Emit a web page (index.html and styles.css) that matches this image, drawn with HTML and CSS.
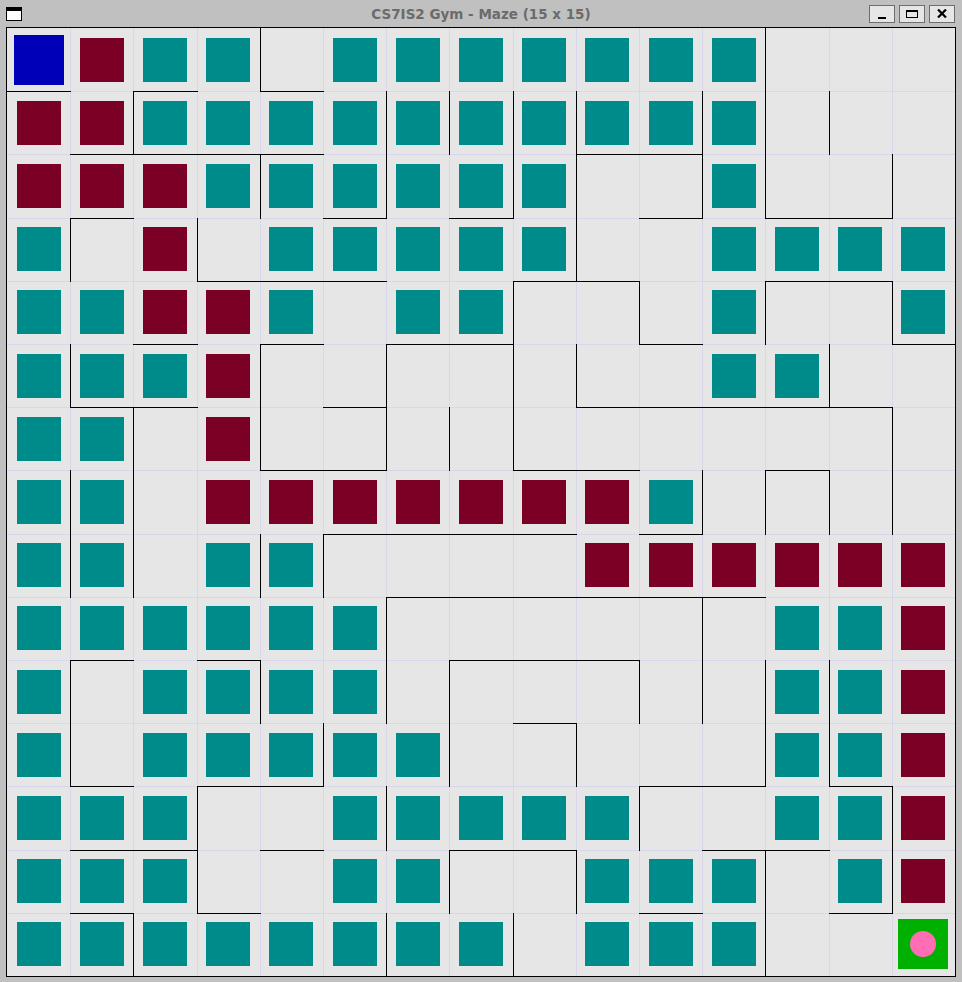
FILE: index.html
```html
<!DOCTYPE html>
<html>
<head>
<meta charset="utf-8">
<title>CS7IS2 Gym - Maze (15 x 15)</title>
<link rel="stylesheet" href="styles.css">
</head>
<body>
<!-- vindu-tittel med ikon og knapper -->
<div class="titlebar">
    <div class="appicon"></div>
    <div class="title">CS7IS2 Gym - Maze (15 x 15)</div>
    <div class="winbtns">
        <div class="wbtn"><span class="min"></span></div>
        <div class="wbtn"><span class="max"></span></div>
        <div class="wbtn">
            <svg width="10" height="9" viewBox="0 0 10 9"><path d="M1 0.5 L9 8.5 M9 0.5 L1 8.5" stroke="#000" stroke-width="2.2"/></svg>
        </div>
    </div>
</div>

<!-- labyrinten: s = start, g = mål, m = sti, t = besøkt. r/b = vegg til høyre/under -->
<div class="maze">
<!-- rad 0 -->
<div class="c b"><i class="s"></i></div><div class="c"><i class="m"></i></div><div class="c b"><i class="t"></i></div><div class="c r"><i class="t"></i></div><div class="c b"></div><div class="c"><i class="t"></i></div><div class="c"><i class="t"></i></div><div class="c"><i class="t"></i></div><div class="c"><i class="t"></i></div><div class="c"><i class="t"></i></div><div class="c"><i class="t"></i></div><div class="c r"><i class="t"></i></div><div class="c"></div><div class="c"></div><div class="c"></div>
<!-- rad 1 -->
<div class="c"><i class="m"></i></div><div class="c r b"><i class="m"></i></div><div class="c b"><i class="t"></i></div><div class="c b"><i class="t"></i></div><div class="c b"><i class="t"></i></div><div class="c r"><i class="t"></i></div><div class="c r"><i class="t"></i></div><div class="c r"><i class="t"></i></div><div class="c r"><i class="t"></i></div><div class="c b"><i class="t"></i></div><div class="c r b"><i class="t"></i></div><div class="c r"><i class="t"></i></div><div class="c r"></div><div class="c"></div><div class="c"></div>
<!-- rad 2 -->
<div class="c"><i class="m"></i></div><div class="c b"><i class="m"></i></div><div class="c"><i class="m"></i></div><div class="c r"><i class="t"></i></div><div class="c"><i class="t"></i></div><div class="c r b"><i class="t"></i></div><div class="c"><i class="t"></i></div><div class="c r b"><i class="t"></i></div><div class="c r"><i class="t"></i></div><div class="c"></div><div class="c r b"></div><div class="c r"><i class="t"></i></div><div class="c b"></div><div class="c r b"></div><div class="c"></div>
<!-- rad 3 -->
<div class="c r"><i class="t"></i></div><div class="c"></div><div class="c r"><i class="m"></i></div><div class="c b"></div><div class="c b"><i class="t"></i></div><div class="c b"><i class="t"></i></div><div class="c"><i class="t"></i></div><div class="c"><i class="t"></i></div><div class="c r b"><i class="t"></i></div><div class="c b"></div><div class="c"></div><div class="c"><i class="t"></i></div><div class="c b"><i class="t"></i></div><div class="c b"><i class="t"></i></div><div class="c"><i class="t"></i></div>
<!-- rad 4 -->
<div class="c"><i class="t"></i></div><div class="c"><i class="t"></i></div><div class="c b"><i class="m"></i></div><div class="c"><i class="m"></i></div><div class="c b"><i class="t"></i></div><div class="c"></div><div class="c b"><i class="t"></i></div><div class="c r b"><i class="t"></i></div><div class="c"></div><div class="c r"></div><div class="c b"></div><div class="c r"><i class="t"></i></div><div class="c"></div><div class="c r"></div><div class="c b"><i class="t"></i></div>
<!-- rad 5 -->
<div class="c r"><i class="t"></i></div><div class="c b"><i class="t"></i></div><div class="c b"><i class="t"></i></div><div class="c r"><i class="m"></i></div><div class="c"></div><div class="c r b"></div><div class="c"></div><div class="c r"></div><div class="c r"></div><div class="c b"></div><div class="c b"></div><div class="c b"><i class="t"></i></div><div class="c r b"><i class="t"></i></div><div class="c b"></div><div class="c"></div>
<!-- rad 6 -->
<div class="c"><i class="t"></i></div><div class="c r"><i class="t"></i></div><div class="c"></div><div class="c r"><i class="m"></i></div><div class="c b"></div><div class="c r b"></div><div class="c r"></div><div class="c r"></div><div class="c b"></div><div class="c b"></div><div class="c"></div><div class="c"></div><div class="c b"></div><div class="c r"></div><div class="c"></div>
<!-- rad 7 -->
<div class="c r"><i class="t"></i></div><div class="c r"><i class="t"></i></div><div class="c"></div><div class="c"><i class="m"></i></div><div class="c"><i class="m"></i></div><div class="c b"><i class="m"></i></div><div class="c b"><i class="m"></i></div><div class="c b"><i class="m"></i></div><div class="c b"><i class="m"></i></div><div class="c"><i class="m"></i></div><div class="c r b"><i class="t"></i></div><div class="c r"></div><div class="c r"></div><div class="c r"></div><div class="c"></div>
<!-- rad 8 -->
<div class="c r"><i class="t"></i></div><div class="c r"><i class="t"></i></div><div class="c"></div><div class="c r"><i class="t"></i></div><div class="c r"><i class="t"></i></div><div class="c"></div><div class="c b"></div><div class="c b"></div><div class="c b"></div><div class="c b"><i class="m"></i></div><div class="c b"><i class="m"></i></div><div class="c b"><i class="m"></i></div><div class="c"><i class="m"></i></div><div class="c"><i class="m"></i></div><div class="c"><i class="m"></i></div>
<!-- rad 9 -->
<div class="c"><i class="t"></i></div><div class="c b"><i class="t"></i></div><div class="c"><i class="t"></i></div><div class="c b"><i class="t"></i></div><div class="c"><i class="t"></i></div><div class="c r"><i class="t"></i></div><div class="c"></div><div class="c b"></div><div class="c b"></div><div class="c b"></div><div class="c r"></div><div class="c"></div><div class="c"><i class="t"></i></div><div class="c"><i class="t"></i></div><div class="c"><i class="m"></i></div>
<!-- rad 10 -->
<div class="c r"><i class="t"></i></div><div class="c"></div><div class="c"><i class="t"></i></div><div class="c r"><i class="t"></i></div><div class="c"><i class="t"></i></div><div class="c r"><i class="t"></i></div><div class="c r"></div><div class="c"></div><div class="c b"></div><div class="c r"></div><div class="c r"></div><div class="c r"></div><div class="c r"><i class="t"></i></div><div class="c"><i class="t"></i></div><div class="c"><i class="m"></i></div>
<!-- rad 11 -->
<div class="c r"><i class="t"></i></div><div class="c b"></div><div class="c"><i class="t"></i></div><div class="c b"><i class="t"></i></div><div class="c r b"><i class="t"></i></div><div class="c"><i class="t"></i></div><div class="c r"><i class="t"></i></div><div class="c"></div><div class="c r"></div><div class="c"></div><div class="c b"></div><div class="c r b"></div><div class="c r"><i class="t"></i></div><div class="c b"><i class="t"></i></div><div class="c"><i class="m"></i></div>
<!-- rad 12 -->
<div class="c"><i class="t"></i></div><div class="c b"><i class="t"></i></div><div class="c r b"><i class="t"></i></div><div class="c"></div><div class="c b"></div><div class="c r"><i class="t"></i></div><div class="c"><i class="t"></i></div><div class="c b"><i class="t"></i></div><div class="c b"><i class="t"></i></div><div class="c r"><i class="t"></i></div><div class="c"></div><div class="c b"></div><div class="c b"><i class="t"></i></div><div class="c r"><i class="t"></i></div><div class="c"><i class="m"></i></div>
<!-- rad 13 -->
<div class="c"><i class="t"></i></div><div class="c b"><i class="t"></i></div><div class="c r"><i class="t"></i></div><div class="c b"></div><div class="c"></div><div class="c"><i class="t"></i></div><div class="c r"><i class="t"></i></div><div class="c"></div><div class="c r"></div><div class="c"><i class="t"></i></div><div class="c b"><i class="t"></i></div><div class="c r"><i class="t"></i></div><div class="c"></div><div class="c r b"><i class="t"></i></div><div class="c"><i class="m"></i></div>
<!-- rad 14 -->
<div class="c"><i class="t"></i></div><div class="c r"><i class="t"></i></div><div class="c"><i class="t"></i></div><div class="c"><i class="t"></i></div><div class="c"><i class="t"></i></div><div class="c r"><i class="t"></i></div><div class="c"><i class="t"></i></div><div class="c r"><i class="t"></i></div><div class="c"></div><div class="c"><i class="t"></i></div><div class="c"><i class="t"></i></div><div class="c r"><i class="t"></i></div><div class="c"></div><div class="c"></div><div class="c"><i class="g"></i></div>
</div>
</body>
</html>
```

FILE: styles.css
```css
/* Hele vinduet er grått, som rammen rundt et vanlig programvindu */
body {
    margin: 0;
    background-color: #c0c0c0;
    font-family: "DejaVu Sans", "Liberation Sans", sans-serif;
}

/* Tittellinjen øverst */
.titlebar {
    height: 27px;
    display: grid;
    grid-template-columns: 1fr auto 1fr;
    align-items: center;
}
.appicon {
    justify-self: start;
    margin-left: 6px;
    width: 14px;
    height: 9px;
    border: 1px solid #000;
    border-top-width: 4px;
    background-color: #fff;
}
.title {
    font-size: 13.5px;
    font-weight: bold;
    color: #6b6b6b;
}
.winbtns {
    justify-self: end;
    margin-right: 7px;
    display: flex;
    gap: 4px;
}
.wbtn {
    width: 24px;
    height: 16px;
    border: 1px solid #6e6e6e;
    background-color: #e6e6e6;
    display: flex;
    align-items: center;
    justify-content: center;
}
.min {
    width: 8px;
    height: 2px;
    background-color: #000;
    margin-top: 8px;
}
.max {
    width: 10px;
    height: 5px;
    border: 1px solid #000;
    border-top-width: 2px;
}

/* Selve labyrinten: 15 x 15 ruter */
.maze {
    margin-left: 6px;
    width: 950px;
    height: 950px;
    box-sizing: border-box;
    border: 1px solid #000;
    background-color: #e6e6e6;
    display: grid;
    grid-template-columns: repeat(15, 1fr);
    grid-template-rows: repeat(15, 1fr);
}

/* Hver rute har en tynn lilla strek oppe og til venstre */
.c {
    position: relative;
    display: flex;
    align-items: center;
    justify-content: center;
    box-shadow: inset 1px 1px 0 #d9d6eb;
}
.c:nth-child(15n+1) {
    box-shadow: inset 0 1px 0 #d9d6eb;
}
.c:nth-child(-n+15) {
    box-shadow: inset 1px 0 0 #d9d6eb;
}
.c:first-child {
    box-shadow: none;
}

/* Vegger til høyre (r) og under (b) */
.r::before {
    content: "";
    position: absolute;
    z-index: 1;
    top: 0;
    bottom: -1px;
    right: -1px;
    width: 1px;
    background-color: #000;
}
.b::after {
    content: "";
    position: absolute;
    z-index: 1;
    left: 0;
    right: -1px;
    bottom: -1px;
    height: 1px;
    background-color: #000;
}

/* Fargede firkanter */
.c i {
    display: block;
    width: 44px;
    height: 44px;
}
.c .t {
    background-color: #008b8b;
}
.c .m {
    background-color: #7a0026;
}
.c .s {
    width: 50px;
    height: 50px;
    background-color: #0000b8;
}
.c .g {
    width: 50px;
    height: 50px;
    background-color: #00b000;
    display: flex;
    align-items: center;
    justify-content: center;
}
.g::after {
    content: "";
    width: 26px;
    height: 26px;
    border-radius: 50%;
    background-color: #ff6eb4;
}
```
